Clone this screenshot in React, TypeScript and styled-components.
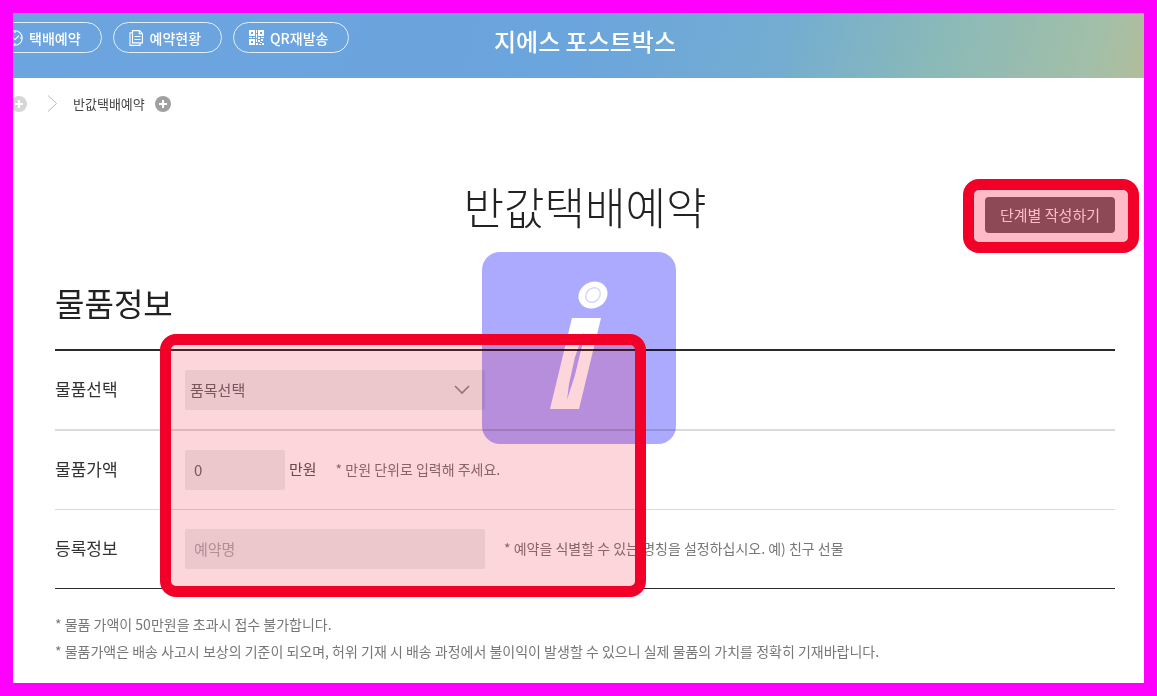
import React from "react";
import styled, { createGlobalStyle, css } from "styled-components";

const GlobalStyle = createGlobalStyle`
  *, *::before, *::after { box-sizing: border-box; }
  body { margin: 0; background: #fff; }
  body, button, input, select {
    font-family: "Noto Sans CJK KR", "Noto Sans", sans-serif;
  }
`;

const Frame = styled.div`
  position: relative;
  min-height: 100vh;
  border: 13px solid #ff00ff;
  background: #fff;
  overflow: hidden;
`;

const Header = styled.header`
  display: grid;
  grid-template-columns: 1fr auto 1fr;
  height: 65px;
  padding: 0 29px 0 42px;
  background: linear-gradient(105deg, #6ca4df 0%, #6ba5dd 50%, #74add0 68%, #8ab9b9 81%, #a2bfa8 95%, #b2bd9c 100%);
`;

const QuickNav = styled.nav`
  display: flex;
  gap: 11px;
  margin: 9px 0 0 -64px;
`;

const Pill = styled.a`
  display: flex;
  align-items: center;
  justify-content: center;
  gap: 6px;
  height: 31px;
  padding: 0 20px 0 15px;
  border: 1px solid #e3effb;
  border-radius: 16px;
  color: #fff;
  font-size: 14px;
  font-weight: 500;
  line-height: 20px;
  text-decoration: none;
  white-space: nowrap;
`;

const Logo = styled.a`
  margin-top: 12px;
  color: #fff;
  font-size: 24px;
  font-weight: 500;
  line-height: 32px;
  text-decoration: none;
  white-space: nowrap;
`;

const Breadcrumb = styled.nav`
  display: flex;
  align-items: center;
  height: 51px;
  margin-left: -2px;
`;

const Crumb = styled.a`
  margin: 0 10px 0 15px;
  color: #444;
  font-size: 13px;
  line-height: 20px;
  text-decoration: none;
`;

const MoreButton = styled.button<{ $faded?: boolean }>`
  display: flex;
  padding: 0;
  border: 0;
  background: none;
  color: ${(p) => (p.$faded ? "#d6d6d6" : "#a0a0a0")};
  margin-right: ${(p) => (p.$faded ? "20px" : "0")};
`;

const Main = styled.main`
  padding: 0 29px 16px 42px;
`;

const TitleRow = styled.div`
  display: grid;
  grid-template-columns: 1fr auto 1fr;
  align-items: end;
  padding-top: 45px;
`;

const PageTitle = styled.h1`
  grid-column: 2;
  margin: 0;
  color: #222;
  font-size: 44px;
  font-weight: 300;
  line-height: 64px;
`;

const StepAction = styled.div`
  position: relative;
  justify-self: end;
  margin-bottom: 5px;
`;

const StepButton = styled.button`
  display: block;
  width: 130px;
  height: 36px;
  padding: 0;
  border: 0;
  border-radius: 4px;
  background: #636463;
  color: #fff;
  font-size: 15px;
  line-height: 20px;
`;

const marker = css`
  position: absolute;
  z-index: 2;
  border: 11px solid #f20028;
  border-radius: 16px;
  pointer-events: none;
`;

const ButtonMarker = styled.span`
  ${marker}
  inset: -18px -24px -20px -22px;
  background: rgba(255, 0, 50, 0.27);
  background-clip: padding-box;
`;

const FormMarker = styled.span`
  ${marker}
  inset: -17px auto -9px 105px;
  width: 486px;
  background: rgba(240, 0, 40, 0.16);
  background-clip: padding-box;
`;

const SectionTitle = styled.h2`
  margin: 41px 0 24px;
  color: #222;
  font-size: 32px;
  font-weight: 400;
  line-height: 46px;
`;

const Form = styled.form`
  position: relative;
  border-top: 2px solid #2b2b2b;
  border-bottom: 1px solid #2b2b2b;
`;

const Row = styled.div<{ $rule?: number }>`
  display: flex;
  align-items: center;
  padding: 19px 0;
  border-bottom: ${(p) => p.$rule ?? 0}px solid #dadada;
`;

const Label = styled.label`
  width: 130px;
  padding-bottom: 2px;
  color: #333;
  font-size: 17px;
  line-height: 24px;
`;

const field = css`
  height: 40px;
  border: 0;
  border-radius: 2px;
  background: #ebedec;
  color: #666;
  font-size: 15px;
`;

const TextField = styled.input<{ $short?: boolean }>`
  ${field}
  width: ${(p) => (p.$short ? "100px" : "300px")};
  padding: 0 9px 2px;
  &::placeholder { color: #aaa; opacity: 1; }
`;

const SelectBox = styled.div`
  position: relative;
  width: 300px;
`;

const Select = styled.select`
  ${field}
  width: 100%;
  padding: 0 5px 2px;
  appearance: none;
`;

const Arrow = styled.svg`
  position: absolute;
  top: 15px;
  right: 15px;
  pointer-events: none;
`;

const Unit = styled.span`
  margin-left: 4px;
  padding-bottom: 2px;
  color: #555;
  font-size: 15px;
  line-height: 24px;
`;

const Hint = styled.span`
  margin-left: 19px;
  padding-bottom: 2px;
  color: #777;
  font-size: 14px;
  line-height: 24px;
`;

const Notes = styled.ul`
  margin: 22px 0 0;
  padding: 0;
  list-style: none;
  color: #777;
  font-size: 14px;
  line-height: 27px;
`;

const Watermark = styled.svg`
  position: absolute;
  top: 50%;
  left: 50%;
  z-index: 1;
  transform: translate(-50%, -50%);
  mix-blend-mode: multiply;
  pointer-events: none;
`;

const ClockIcon = () => (
  <svg width="16" height="16" viewBox="0 0 16 16" fill="none" stroke="#fff" strokeWidth="1.1">
    <circle cx="8" cy="8" r="7.2" />
    <path d="M5 7l3 2.6L12 5.6M8 1v2M8 13v2M1 8h2M13 8h2" />
  </svg>
);

const DocumentIcon = () => (
  <svg width="15" height="16" viewBox="0 0 15 16" fill="none" stroke="#fff" strokeWidth="1.1">
    <path d="M3.5 .6h7l2.900 3v9.300H3.500zM3.500 2.800H1v12.600h10v-2.500M10.300 .8v3h3M5.500 6.500h6M5.500 9.500h6" />
  </svg>
);

const QrIcon = () => (
  <svg width="15" height="15" viewBox="0 0 15 15" fill="#fff">
    <path fillRule="evenodd" d="M0 0h6v6H0zM2 2v2h2v-2zM9 0h6v6H9zM11 2v2h2v-2zM0 9h6v6H0zM2 11v2h2v-2z" />
    <path d="M7 0h1v3H7zM7 4h1v4H7zM0 7h3v1H0zM4 7h2v1H4zM9 7h2v2H9zM12 7h3v1h-3zM7 9h1v3H7zM9 10h2v2H9zM12 9h2v2h-2zM7 13h2v2H7zM11 12h2v1h-2zM13 13h2v2h-2zM10 14h2v1h-2z" />
  </svg>
);

const PlusIcon = () => (
  <svg width="16" height="16" viewBox="0 0 16 16">
    <circle cx="8" cy="8" r="8" fill="currentColor" />
    <path d="M8 4v8M4 8h8" stroke="#fff" strokeWidth="2" />
  </svg>
);

export default function App() {
  return (
    <>
      <GlobalStyle />
      <Frame>
        <Header>
          <QuickNav>
            <Pill href="#reserve"><ClockIcon />택배예약</Pill>
            <Pill href="#status"><DocumentIcon />예약현황</Pill>
            <Pill href="#qr"><QrIcon />QR재발송</Pill>
          </QuickNav>
          <Logo href="#home">지에스 포스트박스</Logo>
        </Header>
        <Breadcrumb>
          <MoreButton $faded aria-label="상위 메뉴"><PlusIcon /></MoreButton>
          <svg width="11" height="17" viewBox="0 0 11 17" fill="none" stroke="#bbb">
            <path d="M1 .5l8.500 8L1 16.500" />
          </svg>
          <Crumb href="#half-price">반값택배예약</Crumb>
          <MoreButton aria-label="하위 메뉴"><PlusIcon /></MoreButton>
        </Breadcrumb>
        <Main>
          <TitleRow>
            <PageTitle>반값택배예약</PageTitle>
            <StepAction>
              <StepButton type="button">단계별 작성하기</StepButton>
              <ButtonMarker />
            </StepAction>
          </TitleRow>
          <SectionTitle>물품정보</SectionTitle>
          <Form>
            <Row $rule={2}>
              <Label htmlFor="item">물품선택</Label>
              <SelectBox>
                <Select id="item"><option>품목선택</option></Select>
                <Arrow width="16" height="10" viewBox="0 0 16 10" fill="none" stroke="#888" strokeWidth="1.6">
                  <path d="M1 1l7 7 7-7" />
                </Arrow>
              </SelectBox>
            </Row>
            <Row $rule={1}>
              <Label htmlFor="price">물품가액</Label>
              <TextField id="price" $short defaultValue="0" />
              <Unit>만원</Unit>
              <Hint>* 만원 단위로 입력해 주세요.</Hint>
            </Row>
            <Row>
              <Label htmlFor="name">등록정보</Label>
              <TextField id="name" placeholder="예약명" />
              <Hint>* 예약을 식별할 수 있는 명칭을 설정하십시오. 예) 친구 선물</Hint>
            </Row>
            <FormMarker />
          </Form>
          <Notes>
            <li>* 물품 가액이 50만원을 초과시 접수 불가합니다.</li>
            <li>* 물품가액은 배송 사고시 보상의 기준이 되오며, 허위 기재 시 배송 과정에서 불이익이 발생할 수 있으니 실제 물품의 가치를 정확히 기재바랍니다.</li>
          </Notes>
        </Main>
        <Watermark width="194" height="192" viewBox="0 0 194 192">
          <rect width="194" height="192" rx="18" fill="#abaaff" />
          <ellipse cx="111" cy="43" rx="15" ry="13" transform="rotate(-30 111 43)" fill="#fff" />
          <ellipse cx="111" cy="43" rx="8" ry="6.500" transform="rotate(-45 111 43)" fill="none" stroke="#d9d6fb" strokeWidth="1.500" />
          <path d="M90 66h29L97 157H68z" fill="#fff" />
          <path d="M102 80l-2 14-7 29-8 25 2-16 6-27z" fill="#abaaff" />
        </Watermark>
      </Frame>
    </>
  );
}
